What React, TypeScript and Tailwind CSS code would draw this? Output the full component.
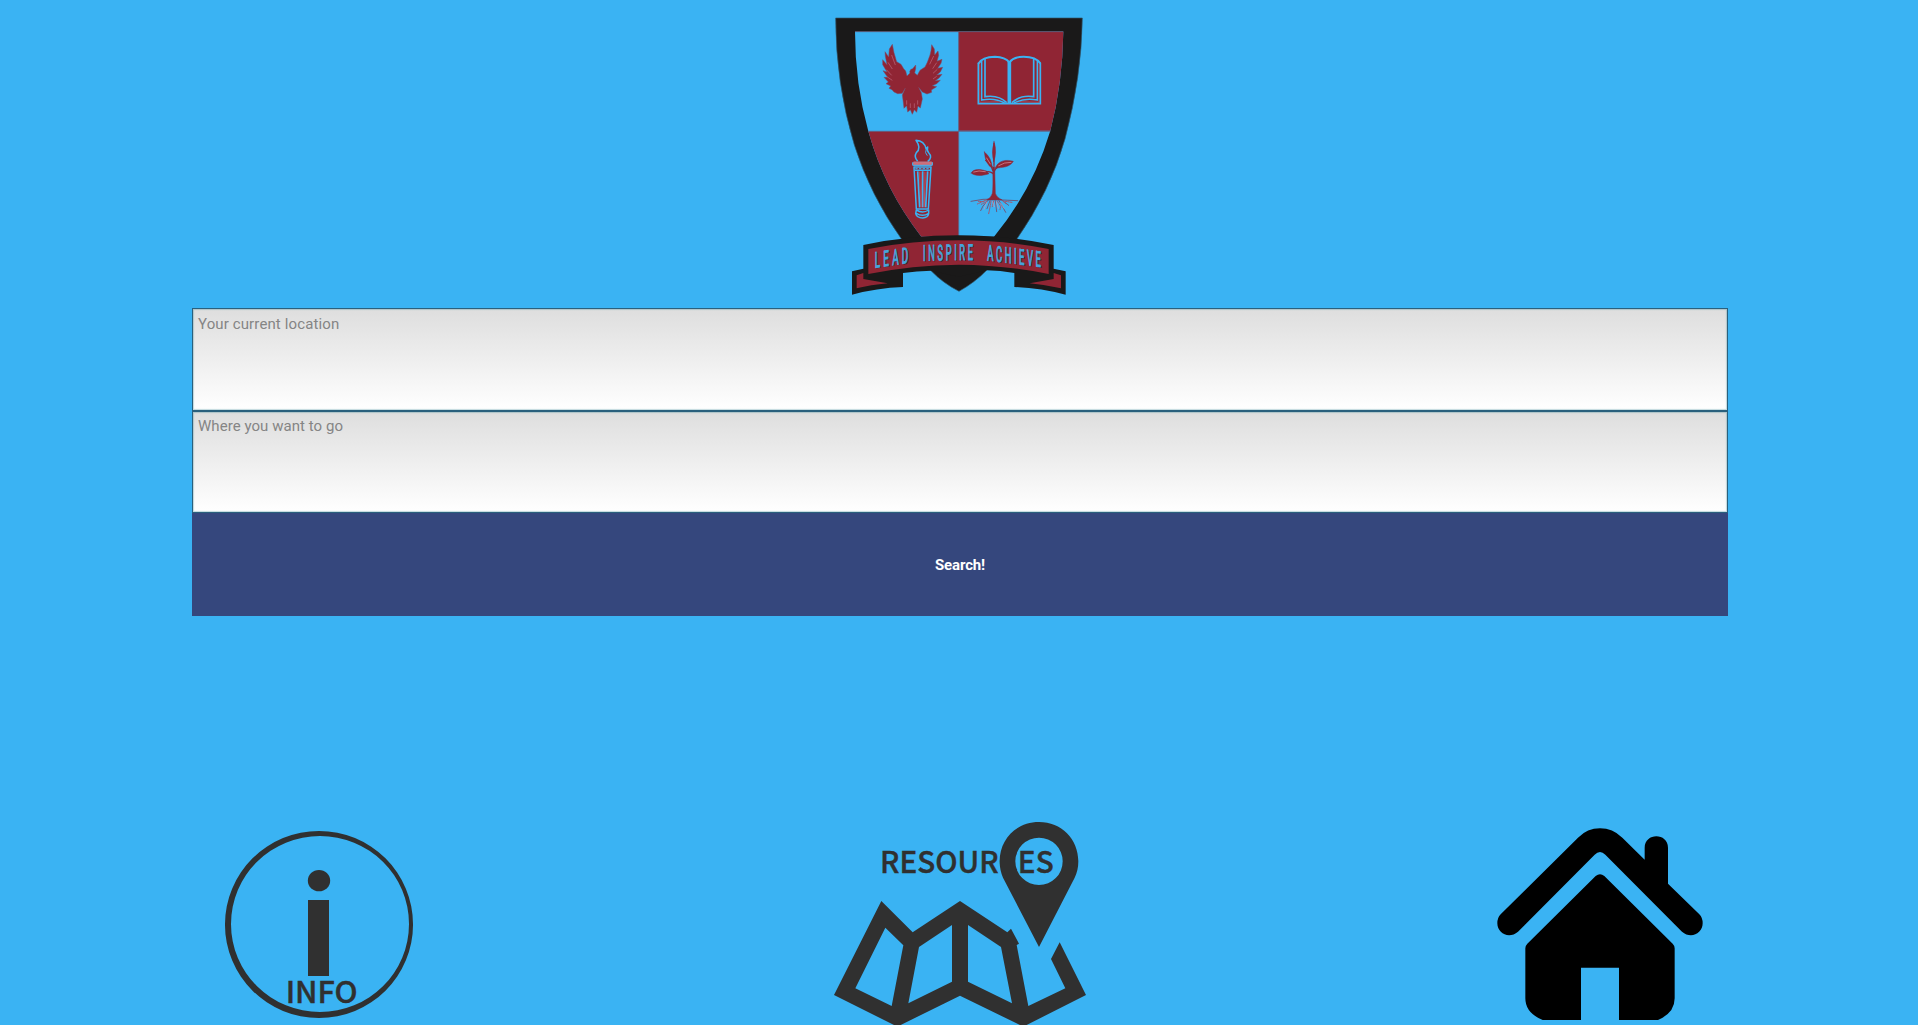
const SKY = '#3ab3f3';
const MAROON = '#902534';
const INK = '#1a1919';
const CHARCOAL = '#303030';

function Bird() {
  return (
    <g fill={MAROON} stroke="#7d4a66" strokeWidth="1.5" strokeLinejoin="round">
      <path d="M217 133 L222 158 L230 185 L243 193 L251 206 L257 213 L261 228 L270 219 L269 215 Q271 206 278 206 L287 195 L287 206 L284 219 L292 226 L300 211 L315 201 L322 187 L330 165 L333 152 L335 134 L343 147 L344 165 L354 153 L356 166 L351 184 L366 178 L363 190 L353 205 L368 202 L361 216 L350 225 L366 223 L357 234 L346 242 L361 241 L350 251 L337 257 L350 260 L334 270 L335 277 L321 282 L307 276 L296 262 L304 278 L307 297 L301 324 L294 318 L290 337 L283 329 L277 343 L271 329 L263 336 L260 317 L252 325 L249 300 L247 285 L256 264 L247 280 L233 281 L222 276 L216 269 L207 265 L212 258 L198 251 L205 246 L192 232 L203 232 L189 212 L201 216 L188 194 L188 179 L201 194 L196 169 L195 155 L206 171 L208 147 Z" />
      <path
        d="M215 165 L226 195 M204 187 L217 207 M199 209 L215 226 M202 231 L217 241 M341 168 L329 193 M350 188 L338 206 M352 208 L339 220 M350 229 L339 237 M260 314 V301 M271 324 V310 M283 324 V310 M293 314 V301"
        fill="none"
        stroke="#c7798f"
        strokeWidth="1.6"
      />
    </g>
  );
}

function Book() {
  return (
    <g fill="none" stroke={SKY} strokeWidth="5">
      <path d="M475 188 V311 H661 V188" />
      <path d="M475 191 Q487 170 525 170 Q556 171 568 187 Q581 170 611 170 Q648 170 661 190" strokeWidth="6" />
      <path d="M568 185 V310" strokeWidth="11" />
      <path d="M495 175 V290 Q536 284 560 308 M641 175 V290 Q601 284 576 308" />
      <path d="M485 182 V300 Q524 292 554 309 M652 182 V300 Q614 292 582 309" strokeWidth="4.5" />
      <path d="M479 184 V307 L535 305 M657 190 V307 L600 305" stroke="#cc7687" strokeWidth="1.2" />
    </g>
  );
}

function Torch() {
  return (
    <g fill="none" stroke={SKY} strokeWidth="4.5" strokeLinejoin="round">
      <path d="M293 484 Q281 471 289 458 Q305 444 288 421 Q313 423 318 446 L323 441 Q320 452 326 458 Q339 471 323 485" />
      <path d="M319 447 Q313 459 322 467" strokeWidth="3" />
      <rect x="279" y="486" width="58" height="10" rx="3" stroke="#b77b8d" strokeWidth="3" fill="#d06d78" />
      <path d="M278 487 V496 H337 V487" strokeWidth="3" />
      <path d="M282 501 L289 627 H325 L333 501 Z M285 511 H332" />
      <path d="M286 506 H331" strokeDasharray="7 4" strokeWidth="3" />
      <path d="M293 514 L299 622 M323 514 L317 622 M308 514 V622" strokeWidth="5" />
      <path d="M298 515 L303 622 M303 515 L306 622 M318 515 L312 622 M313 515 V622" stroke="#d56b76" strokeWidth="1.4" />
      <path d="M289 630 Q308 642 326 630 V641 Q324 653 308 654 Q290 653 287 641 Z M289 640 Q308 652 326 640" />
    </g>
  );
}

function Plant() {
  return (
    <g stroke="#842b42" strokeLinecap="round" strokeLinejoin="round">
      <path d="M522 430 V496 M519 520 Q508 513 499 516 M520 522 Q524 502 541 499 M518 511 L513 496 L497 481" fill="none" strokeWidth="4" />
      <g fill={MAROON} strokeWidth="1.5">
        <path d="M522 425 Q513 455 521 486 Q532 455 522 425Z" />
        <path d="M493 456 Q514 471 517 505 Q496 493 493 456Z" />
        <path d="M454 519 C460 504 484 508 499 513 L507 521 C485 529 461 528 454 519Z" />
        <path d="M526 504 C535 480 560 478 580 484 C570 502 545 503 526 504Z" />
        <path d="M518 500 Q520 564 517 580 Q514 594 499 600 L546 600 Q529 592 526 580 L524 500Z" />
      </g>
      <path d="M461 516 Q476 510 496 515 M536 497 Q553 486 573 487 M500 474 L511 492" stroke="#e19aa3" fill="none" strokeWidth="2" />
      <path d="M453 604 L489 598 Q520 596 548 600 L593 602 M505 600 L489 618 L482 632 M510 602 L501 626 M526 602 L530 635 M537 602 L550 624 L557 637 M546 600 L566 616" fill="none" strokeWidth="2" />
      <path d="M498 600 L472 612 M500 605 L484 613 M513 603 L510 622 L506 641 M521 603 L517 620 M532 603 L542 619 L540 629 M548 603 L559 612 M492 605 L475 604 M555 604 L576 607" stroke="#a6566d" fill="none" strokeWidth="3" strokeDasharray="7 3 3 3" />
      <path d="M500 607 L492 628 M518 605 L523 620 M529 606 L535 625 M541 609 L552 625" stroke="#d897a7" fill="none" strokeWidth="2" />
    </g>
  );
}

function MottoWord({ word, place, spacing }: { word: string; place: string; spacing: number }) {
  return (
    <g transform={place} fontFamily="Roboto, sans-serif" fontSize="65" letterSpacing={spacing}>
      <text x="6" y="3" fill="#3f1c2b" aria-hidden="true">{word}</text>
      <text fill="#45a5dc" stroke="#45a5dc" strokeWidth="3">{word}</text>
    </g>
  );
}

function Crest() {
  return (
    <svg className="ml-[2px] block h-[308px] w-[280px]" viewBox="0 0 840 924" role="img" aria-label="School crest">
      <path d="M47 54 H787 Q785 230 735 417 Q690 575 590 718 L500 811 Q465 847 417 874 Q370 850 333 812 L245 718 Q151 586 103 435 Q47 250 47 54Z" fill={INK} stroke="#31566b" strokeWidth="2" />
      <path d="M105 95 H730 Q728 250 691 392 Q638 570 522 710 H304 Q193 568 145 394 Q105 250 105 95Z" fill={SKY} />
      <path d="M416 95 H730 Q728 250 691 392 H416Z M145 394 H416 V710 H304 Q193 568 145 394Z" fill={MAROON} />
      <path d="M416 95 V710 M145 394 H691 M105 95 H730" fill="none" stroke="#646080" strokeWidth="2.5" />
      <Bird />
      <Book />
      <Torch />
      <Plant />
      <path d="M96 814 L130 806 V735 Q268 706 416 706 Q565 706 701 735 V806 L737 814 V884 Q664 865 583 861 V819 Q540 812 500 811 L416 830 L333 812 Q290 813 249 819 V861 Q170 864 96 884Z" fill={INK} />
      <path d="M145 747 Q277 721 416 721 Q560 721 686 747 V822 Q556 795 416 794 Q277 795 145 822Z" fill={MAROON} />
      <path d="M110 826 L130 819 V837 L203 850 Q152 855 110 865Z M723 826 L701 819 V837 L629 850 Q680 855 723 865Z" fill={MAROON} />
      <MottoWord word="LEAD" place="translate(164 803) skewY(-8) scale(0.46 1)" spacing={21} />
      <MottoWord word="INSPIRE" place="translate(309 782) skewY(-1) scale(0.43 1)" spacing={18.5} />
      <MottoWord word="ACHIEVE" place="translate(502 781) skewY(7) scale(0.44 1)" spacing={17} />
    </svg>
  );
}

function InfoIcon() {
  return (
    <svg className="block h-[215px] w-[210px]" viewBox="0 -30 630 645" fill={CHARCOAL}>
      <path fillRule="evenodd" d="M312 33 A282 280.5 0 1 1 312 594 A282 280.5 0 1 1 312 33Z M315 48 A267 264 0 1 0 315 576 A267 264 0 1 0 315 48Z" />
      <ellipse cx="312" cy="182" rx="33.5" ry="32" />
      <path d="M279 240 H342 V468 H279Z" />
      <text x="212" y="549" fontFamily="'Noto Sans CJK SC', sans-serif" fontSize="90" fontWeight="500" textLength="216" lengthAdjust="spacingAndGlyphs" stroke={CHARCOAL} strokeWidth="1.3">INFO</text>
    </svg>
  );
}

function ResourcesIcon() {
  return (
    <svg className="block h-[215px] w-[280px]" viewBox="0 0 840 645" fill={CHARCOAL}>
      <path fillRule="evenodd" d="M657 36 C724 36 775 87 775 154 Q775 181 764 203 L657 411 L549 203 Q539 181 539 154 C539 87 590 36 657 36Z M657 83 A71 71 0 1 0 657 225 A71 71 0 1 0 657 83Z" />
      <path fillRule="evenodd" d="M184 273 L278 367 L420 273 L562 367 L573 356 L597 401 L590 405 L625 588 L736 535 L693 447 L719 397 L798 555 L610 650 L420 557 L232 650 L42 555Z M196 353 L106 535 L215 588 L250 406Z M297 411 L265 580 L396 515 V345Z M444 345 V515 L576 580 L543 411Z" />
      <text x="180" y="188" fontFamily="'Noto Sans CJK SC', sans-serif" fontSize="90" fontWeight="500" textLength="521" lengthAdjust="spacingAndGlyphs" stroke={CHARCOAL} strokeWidth="1.3">RESOURCES</text>
    </svg>
  );
}

function HomeIcon() {
  return (
    <svg className="block h-[215px] w-[240px]" viewBox="0 -15 720 645">
      <path d="M62 298 L294 68 Q322 40 360 40 Q398 40 427 68 L494 134 V98 C494 52 564 52 564 98 V206 L658 298 Q668 308 668 325 C668 356 632 373 606 350 L376 119 Q360 103 344 119 L114 350 C88 373 52 356 52 325 Q52 308 62 298Z" />
      <path d="M347 183 Q360 173 373 183 L578 386 Q584 392 584 400 V550 Q584 594 534 615 H417 V458 H303 V615 H188 Q136 594 136 550 V400 Q136 392 142 386Z" />
    </svg>
  );
}

const fieldClass =
  'block w-full resize-none border border-[#2a607d] bg-linear-to-b from-[#dedede] to-white px-[5px] text-[15px] leading-[20px] text-[#333] shadow-[inset_0_0_1px_1px_rgba(80,145,160,0.35)] outline-none placeholder:text-[#858585]';

export default function App() {
  return (
    <main className="flex h-screen w-full flex-col overflow-hidden bg-[#3ab3f3] font-[Roboto,sans-serif]">
      <header className="flex h-[308px] shrink-0 justify-center">
        <Crest />
      </header>
      <form className="ml-[192px] flex w-[1536px] shrink-0 flex-col" onSubmit={(event) => event.preventDefault()}>
        <textarea className={`${fieldClass} h-[103px] pt-[5px] tracking-[0.12px]`} placeholder="Your current location" />
        <textarea className={`${fieldClass} h-[102px] pt-[4px] tracking-[0.05px]`} placeholder="Where you want to go" />
        <button type="submit" className="h-[103px] bg-[#35477d] pt-[2px] text-[15px] font-bold tracking-[-0.15px] text-white">
          Search!
        </button>
      </form>
      <nav className="mt-[194px] grid shrink-0 grid-cols-[640px_640px_640px] justify-items-center">
        <a aria-label="Info"><InfoIcon /></a>
        <a aria-label="Resources"><ResourcesIcon /></a>
        <a aria-label="Home"><HomeIcon /></a>
      </nav>
    </main>
  );
}
